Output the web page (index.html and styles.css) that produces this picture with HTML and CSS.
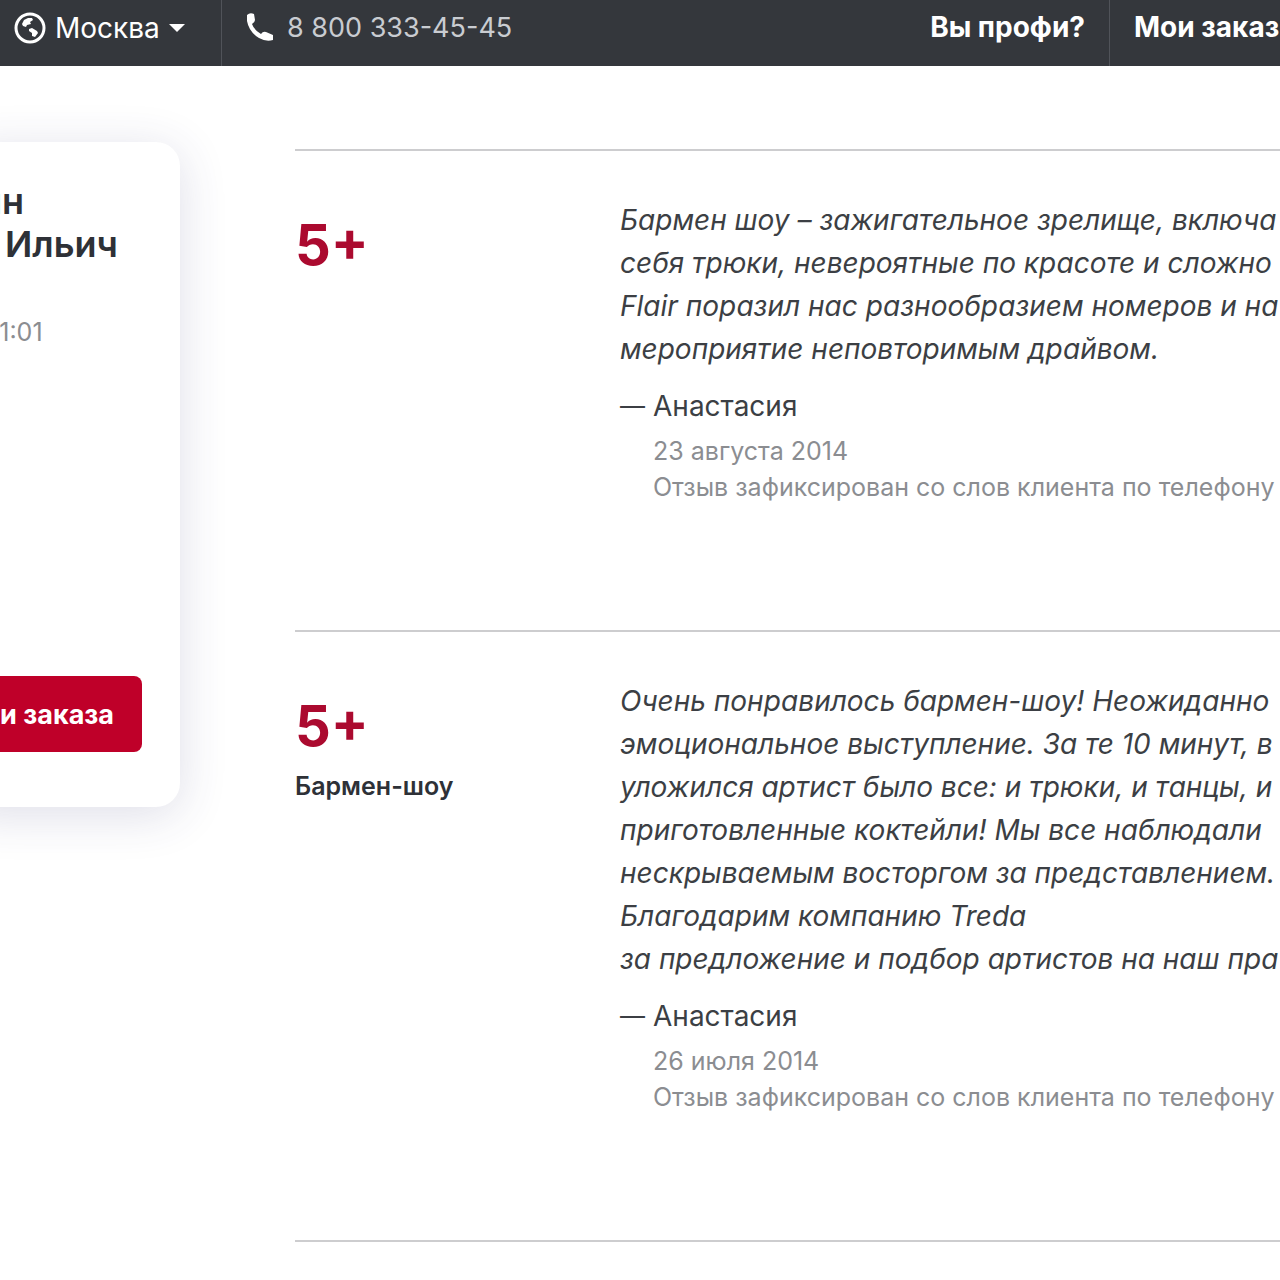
FILE: index.html
```
<!DOCTYPE html>
<html lang="ru">
<head>
<meta charset="UTF-8">
<meta name="viewport" content="width=device-width, initial-scale=1">
<title>Отзывы</title>
<link rel="stylesheet" href="styles.css">
</head>
<body>

<header class="header">
  <button class="city" type="button">
    <svg class="city-icon" viewBox="0 0 32 32" width="32" height="32" aria-hidden="true">
      <circle cx="16" cy="16" r="14" fill="none" stroke="#fff" stroke-width="3"/>
      <path d="M8 12 L10 8 L14 6 L18 6 L19 8 L16 10 L17 12 L13 13 L12 15 L9 14 Z" fill="#fff"/>
      <path d="M15 17 L18 16 L23 19 L24 21 L21 25 L18 24 L18 21 L15 19 Z" fill="#fff"/>
    </svg>
    Москва
    <svg class="city-arrow" viewBox="0 0 16 8" width="16" height="8" aria-hidden="true">
      <path d="M0 0 H16 L8 8 Z" fill="#fff"/>
    </svg>
  </button>
  <a class="phone" href="tel:88003334545">
    <svg viewBox="0 0 28 30" width="28" height="30" aria-hidden="true">
      <path d="M1 3 Q4 0 8 2 L9 8 Q9 10 6 12 Q8 18 15 22 Q17 19 20 20 L27 23 V28 Q20 30 13 26 Q3 20 1 9 Z" fill="#fff"/>
    </svg>
    8 800 333-45-45
  </a>
  <nav class="menu">
    <a class="menu-link" href="#">Вы профи?</a>
    <a class="menu-link menu-orders" href="#">Мои заказы</a>
  </nav>
</header>

<div class="page">
  <aside class="card">
    <h2 class="name">
      <span class="surname">ин</span>
      <span class="first-name">Ильич</span>
    </h2>
    <p class="visited">21:01</p>
    <button class="order" type="button">и заказа</button>
  </aside>

  <main class="reviews">
    <article class="review">
      <div class="mark">
        <div class="score">5+</div>
      </div>
      <div class="content">
        <p class="text">Бармен шоу – зажигательное зрелище, включа<br>
          себя трюки, невероятные по красоте и сложно<br>
          Flair поразил нас разнообразием номеров и на<br>
          мероприятие неповторимым драйвом.</p>
        <p class="author"><span class="dash">—</span>Анастасия</p>
        <p class="note">23 августа 2014<br>Отзыв зафиксирован со слов клиента по телефону</p>
      </div>
    </article>

    <article class="review">
      <div class="mark">
        <div class="score">5+</div>
        <div class="subject">Бармен-шоу</div>
      </div>
      <div class="content">
        <p class="text">Очень понравилось бармен-шоу! Неожиданно<br>
          эмоциональное выступление. За те 10 минут, в<br>
          уложился артист было все: и трюки, и танцы, и<br>
          приготовленные коктейли! Мы все наблюдали<br>
          нескрываемым восторгом за представлением.<br>
          Благодарим компанию Treda<br>
          за предложение и подбор артистов на наш пра</p>
        <p class="author"><span class="dash">—</span>Анастасия</p>
        <p class="note">26 июля 2014<br>Отзыв зафиксирован со слов клиента по телефону</p>
      </div>
    </article>
  </main>
</div>

</body>
</html>
```
FILE: styles.css
```
body {
  margin: 0;
  background: #fff;
  color: #2e3137;
  font-family: Inter, "Open Sans", sans-serif;
  font-size: 28px;
  overflow-x: hidden;
}

h2,
p {
  margin: 0;
}

button {
  border: 0;
  font-family: inherit;
  cursor: pointer;
}

a {
  text-decoration: none;
}

/* header */
.header {
  display: flex;
  height: 66px;
  background: #34373c;
  white-space: nowrap;
  overflow: hidden;
}

.city,
.phone,
.menu-link {
  display: flex;
  align-items: center;
  box-sizing: border-box;
  padding-bottom: 12px;
  color: #fff;
}

.city {
  flex: none;
  width: 222px;
  padding-left: 14px;
  gap: 9px;
  background: none;
  border-right: 1px solid #505359;
  font-size: 28px;
}

.phone {
  padding-left: 24px;
  gap: 13px;
  color: #c9ccd1;
  font-size: 27px;
}

.menu {
  display: flex;
  margin-left: auto;
}

.menu-link {
  padding-right: 24px;
  font-weight: 700;
}

.menu-orders {
  width: 171px;
  padding-left: 24px;
  padding-right: 0;
  border-left: 1px solid #505359;
}

.page {
  display: flex;
  align-items: flex-start;
}

/* specialist card */
.card {
  display: flex;
  flex-direction: column;
  flex: none;
  box-sizing: border-box;
  width: 220px;
  min-height: 665px;
  margin: 76px 0 0 -40px;
  padding: 38px 38px 55px 20px;
  border-radius: 24px;
  box-shadow: 0 8px 48px rgba(50, 50, 110, 0.16);
}

.name {
  font-size: 36px;
  line-height: 43px;
  font-weight: 600;
}

.surname,
.first-name {
  display: block;
}

.first-name {
  padding-left: 25px;
}

.visited {
  margin-top: 48px;
  padding-left: 4px;
  color: #8b8d91;
  font-size: 25px;
  line-height: 36px;
}

.order {
  height: 76px;
  margin-top: auto;
  padding: 0 28px 0 0;
  background: #bf0029;
  border-radius: 8px;
  color: #fff;
  font-size: 27px;
  font-weight: 700;
  text-align: right;
  white-space: nowrap;
}

/* reviews */
.reviews {
  flex: 1;
  min-width: 0;
  margin: 83px 0 0 115px;
  border-bottom: 2px solid #cdcdcf;
}

.review {
  display: grid;
  grid-template-columns: 325px 1fr;
  padding: 48px 0 125px;
  border-top: 2px solid #cdcdcf;
}

.mark {
  padding-top: 14px;
}

.score {
  color: #ab0a2f;
  font-size: 56px;
  line-height: 64px;
  font-weight: 700;
}

.subject {
  margin-top: 12px;
  font-size: 25px;
  line-height: 32px;
  font-weight: 600;
}

.content {
  min-width: 0;
  white-space: nowrap;
}

.text {
  color: #3c3f44;
  font-style: italic;
  line-height: 43px;
}

.author {
  display: flex;
  margin-top: 14px;
  color: #3c3f44;
  line-height: 42px;
}

.dash {
  width: 33px;
  font-size: 25px;
}

.note {
  margin-top: 6px;
  padding-left: 33px;
  color: #8b8d91;
  font-size: 25px;
  line-height: 36px;
}
```
